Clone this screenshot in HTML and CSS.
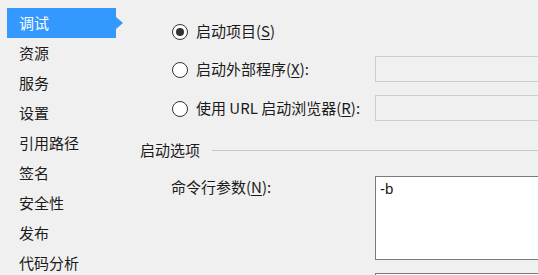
FILE: index.html
```html
<!DOCTYPE html>
<html lang="zh-CN">
<head>
<meta charset="utf-8">
<title>调试</title>
<link rel="stylesheet" href="styles.css">
</head>
<body>
<div class="window">
  <nav class="sidebar">
    <div class="nav-item selected">调试</div>
    <div class="nav-item">资源</div>
    <div class="nav-item">服务</div>
    <div class="nav-item">设置</div>
    <div class="nav-item">引用路径</div>
    <div class="nav-item">签名</div>
    <div class="nav-item">安全性</div>
    <div class="nav-item">发布</div>
    <div class="nav-item">代码分析</div>
  </nav>
  <main class="content">
    <div class="radio-row first">
      <span class="radio checked"></span>
      <span class="label">启动项目(<u>S</u>)</span>
    </div>
    <div class="radio-row second">
      <span class="radio"></span>
      <span class="label">启动外部程序(<u>X</u>):</span>
      <div class="field disabled"></div>
    </div>
    <div class="radio-row third">
      <span class="radio"></span>
      <span class="label">使用 URL 启动浏览器(<u>R</u>):</span>
      <div class="field disabled"></div>
    </div>
    <div class="group-header">
      <span class="group-title">启动选项</span>
      <span class="group-line"></span>
    </div>
    <div class="option-row">
      <span class="label option-label">命令行参数(<u>N</u>):</span>
      <div class="field textarea">-b</div>
    </div>
    <div class="option-row next">
      <span class="label option-label"></span>
      <div class="field textarea short"></div>
    </div>
  </main>
</div>
</body>
</html>
```
FILE: styles.css
```css
html, body {
  margin: 0;
  padding: 0;
  background: #f0f0f0;
  width: 538px;
  height: 275px;
  overflow: hidden;
}
body {
  font-family: "Noto Sans CJK SC", "Noto Sans", sans-serif;
  font-size: 15px;
  color: #1b1b1b;
}
u {
  text-decoration: underline;
  text-underline-offset: 2px;
}
.window {
  display: flex;
  width: 538px;
  height: 275px;
  overflow: hidden;
}
.sidebar {
  width: 130px;
  flex: none;
  padding-top: 8px;
}
.nav-item {
  position: relative;
  margin-left: 7px;
  width: 109px;
  height: 30px;
  line-height: 30px;
  padding-left: 12px;
  box-sizing: border-box;
}
.nav-item.selected {
  background: #3399ff;
  color: #ffffff;
}
.nav-item.selected::after {
  content: "";
  position: absolute;
  left: 109px;
  top: 9px;
  border-top: 6px solid transparent;
  border-bottom: 6px solid transparent;
  border-left: 7px solid #3399ff;
}
.content {
  flex: 1;
  min-width: 0;
  height: 275px;
  overflow: hidden;
  display: flex;
  flex-direction: column;
}
.radio-row {
  display: flex;
  align-items: center;
  height: 26px;
  flex: none;
  padding-left: 42px;
}
.radio-row.first { margin-top: 18px; }
.radio-row.second { margin-top: 12px; }
.radio-row.third { margin-top: 13px; }
.radio {
  width: 14px;
  height: 14px;
  border: 1px solid #333333;
  border-radius: 50%;
  background: #ffffff;
  flex: none;
  display: flex;
  align-items: center;
  justify-content: center;
  margin-top: 1px;
}
.radio.checked::after {
  content: "";
  width: 8px;
  height: 8px;
  border-radius: 50%;
  background: #333333;
}
.label {
  line-height: 20px;
  white-space: nowrap;
}
.radio-row .label {
  margin-left: 8px;
  width: 179px;
  flex: none;
}
.field {
  flex: none;
  box-sizing: border-box;
  width: 180px;
  height: 26px;
}
.field.disabled {
  border: 1px solid #cccccc;
  background: #f0f0f0;
}
.group-header {
  display: flex;
  align-items: center;
  flex: none;
  margin-top: 19px;
  height: 20px;
  padding-left: 10px;
}
.group-title {
  line-height: 20px;
}
.group-line {
  flex: 1;
  height: 1px;
  background: #c8c8c8;
  margin-left: 12px;
}
.option-row {
  display: flex;
  align-items: flex-start;
  flex: none;
  margin-top: 16px;
  padding-left: 41px;
}
.option-row.next {
  margin-top: 13px;
}
.option-label {
  width: 204px;
  flex: none;
  padding-top: 1px;
}
.field.textarea {
  height: 84px;
  border: 1px solid #7a7a7a;
  background: #ffffff;
  font-family: "Liberation Sans", "Noto Sans CJK SC", sans-serif;
  font-size: 15px;
  line-height: 20px;
  padding: 2px 4px;
}
.field.textarea.short {
  height: 3px;
  border-bottom: none;
}
```
